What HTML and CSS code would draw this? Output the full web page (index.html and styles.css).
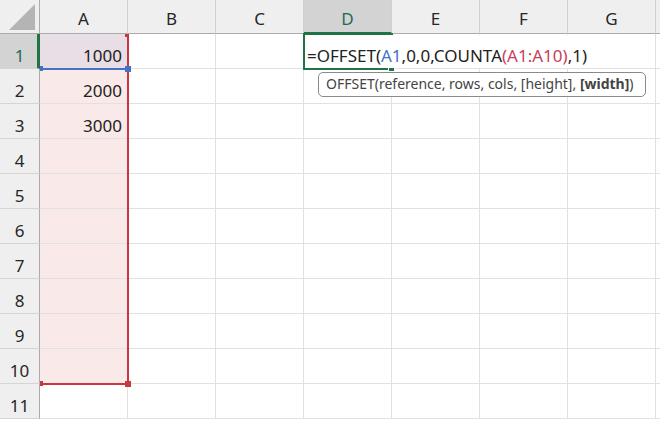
FILE: index.html
```html
<!DOCTYPE html>
<html lang="en">
<head>
    <meta charset="UTF-8">
    <meta name="viewport" content="width=device-width, initial-scale=1.0">
    <title>OFFSET</title>
    <link rel="stylesheet" href="styles.css">
</head>
<body>
    <div class="wrap">
        <div class="sheet">
            <div class="corner">
                <svg width="28" height="28" viewBox="0 0 28 28"><polygon points="27,1 27,27 1,27" fill="#b4b4b4"/></svg>
            </div>
            <div class="colhead">A</div>
            <div class="colhead">B</div>
            <div class="colhead">C</div>
            <div class="colhead active">D</div>
            <div class="colhead">E</div>
            <div class="colhead">F</div>
            <div class="colhead">G</div>
            <div class="colhead"></div>

            <div class="rowhead active">1</div>
            <div class="cell first">1000</div>
            <div class="cell"></div><div class="cell"></div><div class="cell"></div><div class="cell"></div><div class="cell"></div><div class="cell"></div><div class="cell"></div>

            <div class="rowhead">2</div>
            <div class="cell range">2000</div>
            <div class="cell"></div><div class="cell"></div><div class="cell"></div><div class="cell"></div><div class="cell"></div><div class="cell"></div><div class="cell"></div>

            <div class="rowhead">3</div>
            <div class="cell range">3000</div>
            <div class="cell"></div><div class="cell"></div><div class="cell"></div><div class="cell"></div><div class="cell"></div><div class="cell"></div><div class="cell"></div>

            <div class="rowhead">4</div>
            <div class="cell range"></div>
            <div class="cell"></div><div class="cell"></div><div class="cell"></div><div class="cell"></div><div class="cell"></div><div class="cell"></div><div class="cell"></div>

            <div class="rowhead">5</div>
            <div class="cell range"></div>
            <div class="cell"></div><div class="cell"></div><div class="cell"></div><div class="cell"></div><div class="cell"></div><div class="cell"></div><div class="cell"></div>

            <div class="rowhead">6</div>
            <div class="cell range"></div>
            <div class="cell"></div><div class="cell"></div><div class="cell"></div><div class="cell"></div><div class="cell"></div><div class="cell"></div><div class="cell"></div>

            <div class="rowhead">7</div>
            <div class="cell range"></div>
            <div class="cell"></div><div class="cell"></div><div class="cell"></div><div class="cell"></div><div class="cell"></div><div class="cell"></div><div class="cell"></div>

            <div class="rowhead">8</div>
            <div class="cell range"></div>
            <div class="cell"></div><div class="cell"></div><div class="cell"></div><div class="cell"></div><div class="cell"></div><div class="cell"></div><div class="cell"></div>

            <div class="rowhead">9</div>
            <div class="cell range"></div>
            <div class="cell"></div><div class="cell"></div><div class="cell"></div><div class="cell"></div><div class="cell"></div><div class="cell"></div><div class="cell"></div>

            <div class="rowhead">10</div>
            <div class="cell range"></div>
            <div class="cell"></div><div class="cell"></div><div class="cell"></div><div class="cell"></div><div class="cell"></div><div class="cell"></div><div class="cell"></div>

            <div class="rowhead">11</div>
            <div class="cell"></div>
            <div class="cell"></div><div class="cell"></div><div class="cell"></div><div class="cell"></div><div class="cell"></div><div class="cell"></div><div class="cell"></div>
        </div>

        <!-- range highlights -->
        <div class="red-range">
            <span class="dot dot-tr"></span>
            <span class="dot dot-bl"></span>
            <span class="dot dot-br"></span>
        </div>
        <div class="blue-range">
            <span class="bdot bdot-bl"></span>
            <span class="bdot bdot-br"></span>
        </div>

        <!-- cell being edited -->
        <div class="active-cell"><span class="handle"></span></div>
        <div class="editor">=OFFSET(<span class="ref-blue">A1</span>,0,0,COUNTA<span class="ref-red">(A1:A10)</span>,1)</div>

        <div class="tip">OFFSET(reference, rows, cols, [height], <b>[width]</b>)</div>
    </div>
</body>
</html>
```

FILE: styles.css
```css
body {
    margin: 0;
    overflow: hidden;
    background: #fff;
    font-family: "Noto Sans", "Open Sans", sans-serif;
}
.wrap {
    position: relative;
    width: 660px;
    height: 426px;
    overflow: hidden;
}
.sheet {
    display: grid;
    grid-template-columns: 40px repeat(8, 88px);
    grid-template-rows: 34px repeat(11, 35px);
}
.sheet > div {
    box-sizing: border-box;
}
.corner {
    background: #efefef;
    border-right: 1px solid #ababab;
    border-bottom: 1px solid #ababab;
    padding: 3px 0 0 8px;
}
.corner svg {
    display: block;
}
.colhead {
    background: #efefef;
    border-right: 1px solid #d0d0d0;
    border-bottom: 1px solid #ababab;
    color: #262626;
    font-size: 17px;
    text-align: center;
    padding-top: 10px;
    line-height: 1;
}
.colhead.active {
    background: #d3d3d3;
    border-bottom: 2px solid #217346;
    color: #1c6b52;
}
.rowhead {
    background: #efefef;
    border-right: 1px solid #ababab;
    border-bottom: 1px solid #d5d5d5;
    color: #262626;
    font-size: 17px;
    line-height: 1;
    text-align: center;
    padding-top: 13px;
}
.rowhead.active {
    background: #d3d3d3;
    border-right: 3px solid #217346;
    color: #1c6b52;
    padding-left: 2px;
}
.cell {
    border-right: 1px solid #e1e1e1;
    border-bottom: 1px solid #e1e1e1;
    font-size: 17px;
    line-height: 1;
    color: #222;
    text-align: right;
    padding: 13px 5px 0 0;
}
.cell.first {
    background: #e8dee6;
}
.cell.range {
    background: #f9e9e9;
}

/* overlays */
.red-range {
    position: absolute;
    left: 40px;
    top: 34px;
    width: 87px;
    height: 349px;
    border-right: 2px solid #c8363f;
    border-bottom: 2px solid #c8363f;
}
.dot {
    position: absolute;
    background: #c8363f;
}
.dot-tr {
    right: -2px;
    top: 0;
    width: 4px;
    height: 3px;
}
.dot-bl {
    left: 0;
    bottom: -3px;
    width: 3px;
    height: 5px;
}
.dot-br {
    right: -4px;
    bottom: -4px;
    width: 6px;
    height: 6px;
}
.blue-range {
    position: absolute;
    left: 40px;
    top: 68px;
    width: 87px;
    height: 2px;
    background: #4472c4;
}
.bdot {
    position: absolute;
    background: #4472c4;
}
.bdot-bl {
    left: 0;
    top: -2px;
    width: 3px;
    height: 5px;
}
.bdot-br {
    right: -4px;
    top: -2px;
    width: 6px;
    height: 6px;
}
.active-cell {
    position: absolute;
    left: 303px;
    top: 33px;
    width: 90px;
    height: 37px;
    box-sizing: border-box;
    border: 2px solid #217346;
}
.handle {
    position: absolute;
    right: -4px;
    bottom: -4px;
    width: 5px;
    height: 5px;
    background: #217346;
    border: 1px solid #fff;
}
.editor {
    position: absolute;
    left: 305px;
    top: 35px;
    height: 33px;
    padding: 12px 6px 0 2px;
    box-sizing: border-box;
    background: #fff;
    font-size: 17px;
    line-height: 1;
    color: #222;
    white-space: nowrap;
}
.ref-blue {
    color: #4472c4;
}
.ref-red {
    color: #c8405a;
}
.tip {
    position: absolute;
    left: 318px;
    top: 72px;
    width: 328px;
    height: 25px;
    box-sizing: border-box;
    border: 1px solid #8a8a8a;
    border-radius: 5px;
    background: #fff;
    color: #444;
    font-size: 14px;
    line-height: 1;
    padding: 4px 0 0 7px;
    white-space: nowrap;
}
.tip b {
    color: #444;
}
```
